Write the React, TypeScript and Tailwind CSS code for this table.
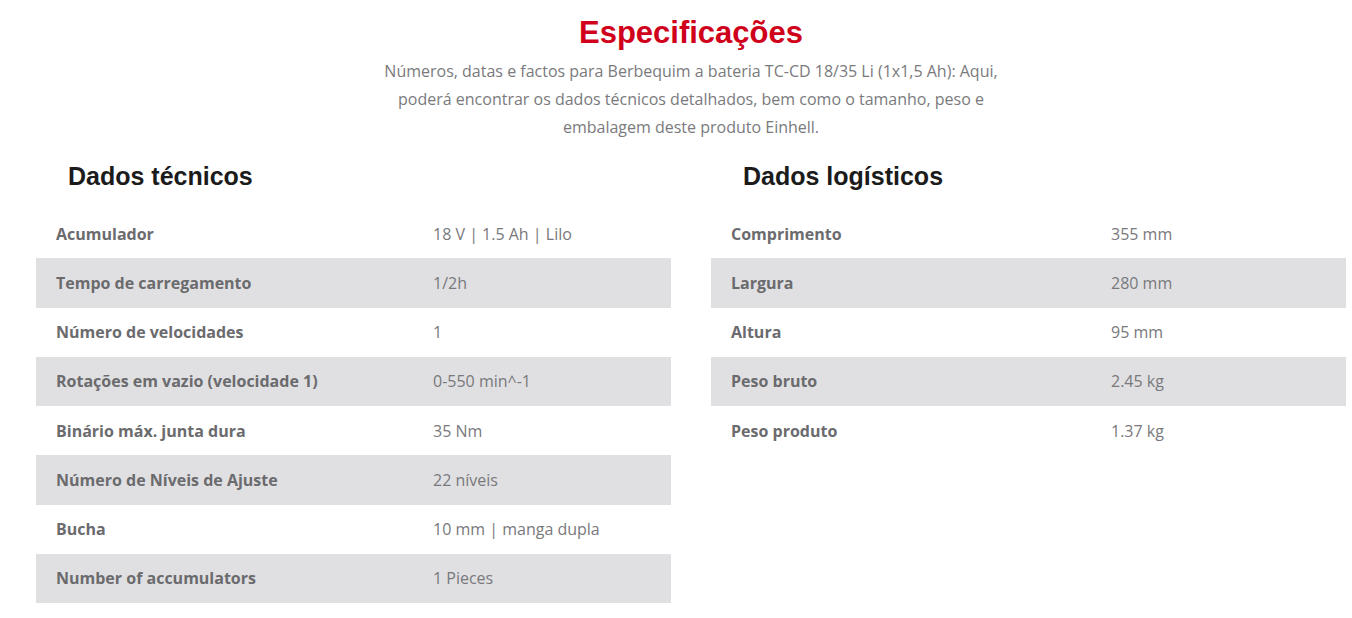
import React from "react";

const tech: [string, React.ReactNode][] = [
  ["Acumulador", "18 V | 1.5 Ah | Lilo"],
  ["Tempo de carregamento", "1/2h"],
  ["Número de velocidades", "1"],
  ["Rotações em vazio (velocidade 1)", "0-550 min^-1"],
  ["Binário máx. junta dura", "35 Nm"],
  ["Número de Níveis de Ajuste", "22 níveis"],
  ["Bucha", "10 mm | manga dupla"],
  ["Number of accumulators", "1 Pieces"],
];

const logi: [string, string][] = [
  ["Comprimento", "355 mm"],
  ["Largura", "280 mm"],
  ["Altura", "95 mm"],
  ["Peso bruto", "2.45 kg"],
  ["Peso produto", "1.37 kg"],
];

function Table({ title, rows, cols }: { title: string; rows: [string, React.ReactNode][]; cols: string }) {
  return (
    <div className="flex-1 min-w-0">
      <h2 className="pl-[32px] h-[49px] pt-[1px] text-[25px] leading-[30px] font-bold text-[#1b1b1b] [font-family:'Liberation_Sans',Arial,sans-serif]">
        {title}
      </h2>
      <div>
        {rows.map(([k, v], i) => (
          <div
            key={k}
            className={`grid ${cols} h-[49.25px] items-center ${i % 2 === 1 ? "bg-[#e0e0e2]" : ""}`}
          >
            <div className="pl-[20px] text-[16px] font-bold text-[#6b6b6e]">{k}</div>
            <div className="pl-[20px] text-[16px] text-[#79797c]">{v}</div>
          </div>
        ))}
      </div>
    </div>
  );
}

export default function App() {
  return (
    <div className="bg-white w-[1352px] h-[618px] pl-[36px] pr-[6px] pt-[14px] [font-family:'Open_Sans',sans-serif]">
      <div className="flex flex-col items-center">
        <h1 className="text-[31px] leading-[38px] font-bold text-[#d0021b] [font-family:'Liberation_Sans',Arial,sans-serif]">
          Especificações
        </h1>
        <p className="w-[625px] text-center text-[16px] leading-[28px] text-[#7a7a7d] mt-[5px]">
          Números, datas e factos para Berbequim a bateria TC-CD 18/35 Li (1x1,5 Ah): Aqui, poderá encontrar os dados técnicos detalhados, bem como o tamanho, peso e embalagem deste produto Einhell.
        </p>
      </div>
      <div className="flex gap-[40px] mt-[19px]">
        <Table title="Dados técnicos" rows={tech} cols="grid-cols-[377px_1fr]" />
        <Table title="Dados logísticos" rows={logi} cols="grid-cols-[380px_1fr]" />
      </div>
    </div>
  );
}
